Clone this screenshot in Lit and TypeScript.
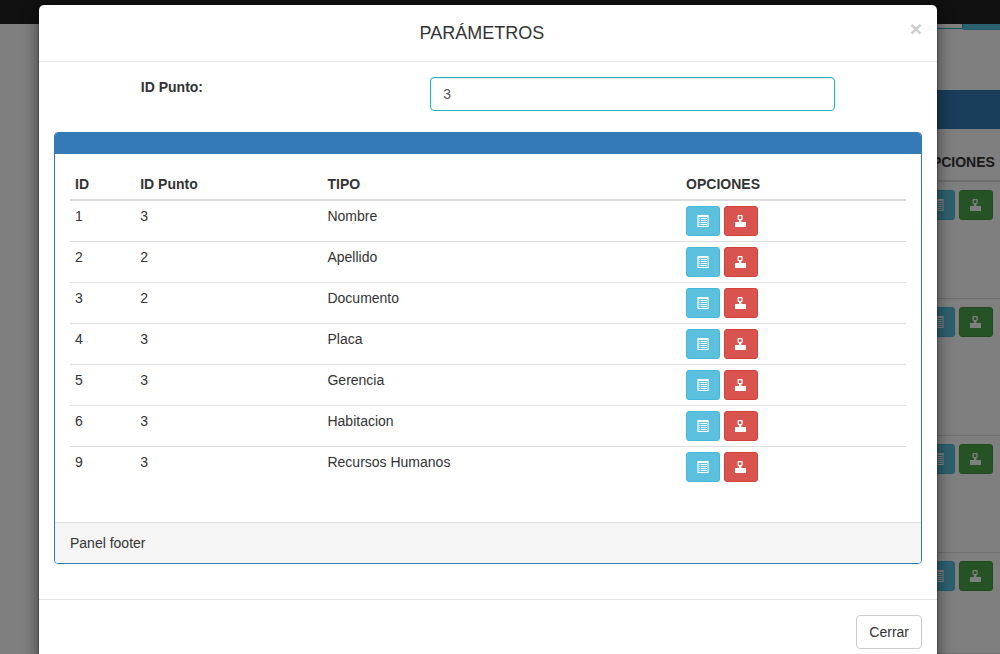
import { LitElement, html, css, svg } from "lit";
import { customElement, property, state } from "lit/decorators.js";

@customElement("icon-button")
class IconButton extends LitElement {
  @property() icon = "list";
  @property() tone = "info";
  @property() label = "";

  static styles = css`
    :host {
      display: inline-block;
    }
    .btn {
      display: flex;
      align-items: center;
      justify-content: center;
      box-sizing: border-box;
      width: 34px;
      height: 30px;
      margin: 0;
      padding: 0 10px;
      border: 1px solid;
      border-radius: 3px;
      color: #fff;
      cursor: pointer;
    }
    .info {
      background: #5bc0de;
      border-color: #46b8da;
    }
    .danger {
      background: #d9534f;
      border-color: #d43f3a;
    }
    .success {
      background: #4ca64c;
      border-color: #449644;
    }
    svg {
      display: block;
      flex: none;
      width: 12px;
      height: 12px;
    }
  `;

  private glyph() {
    return this.icon === "list"
      ? svg`<path fill="currentColor" fill-rule="evenodd" d="M0.4 0h11.2v12H0.4zM1.6 2v9h9V2z"/>
          <path fill="currentColor" d="M2.4 3h1v1h-1zM4 3h6v1H4zM2.4 5h1v1h-1zM4 5h6v1H4zM2.4 7h1v1h-1zM4 7h6v1H4zM2.4 9h1v1h-1zM4 9h6v1H4z"/>`
      : svg`<path fill="currentColor" fill-rule="evenodd" d="M3.3 0h3.6l0.8 0.8v3.4l-0.9 0.9H6.4V7H11v5H0V7h3.9V5.1H3.4l-0.9-0.9V0.8zM3.8 1.2v2.7h2.6V1.2z"/>`;
  }

  render() {
    return html`<button class="btn ${this.tone}" type="button" aria-label=${this.label}>
      <svg viewBox="0 0 12 12" aria-hidden="true">${this.glyph()}</svg>
    </button>`;
  }
}

interface Parametro {
  id: number;
  punto: number;
  tipo: string;
}

@customElement("app-root")
class AppRoot extends LitElement {
  @state() private parametros: Parametro[] = [
    { id: 1, punto: 3, tipo: "Nombre" },
    { id: 2, punto: 2, tipo: "Apellido" },
    { id: 3, punto: 2, tipo: "Documento" },
    { id: 4, punto: 3, tipo: "Placa" },
    { id: 5, punto: 3, tipo: "Gerencia" },
    { id: 6, punto: 3, tipo: "Habitacion" },
    { id: 9, punto: 3, tipo: "Recursos Humanos" },
  ];

  static styles = css`
    :host {
      display: block;
      position: relative;
      height: 100vh;
      overflow: hidden;
      background: #fff;
      color: #333;
      font: 14px/20px "Liberation Sans", Arial, sans-serif;
    }
    * {
      box-sizing: border-box;
    }
    button,
    input {
      font: inherit;
      margin: 0;
    }
    table {
      width: 100%;
      border-spacing: 0;
      table-layout: fixed;
    }
    th {
      text-align: left;
      vertical-align: bottom;
      white-space: nowrap;
      border-bottom: 2px solid #ddd;
    }
    td {
      vertical-align: top;
    }
    tr + tr td {
      border-top: 1px solid #ddd;
    }
    .actions {
      display: flex;
      gap: 4px;
    }

    .navbar {
      height: 24px;
      background: #222;
    }
    .search {
      display: flex;
      align-items: flex-end;
      justify-content: flex-end;
      height: 6px;
      overflow: hidden;
    }
    .search-box {
      width: 240px;
      height: 34px;
      margin-bottom: 1px;
      padding: 6px 12px;
      border: 1px solid #1ab7b7;
    }
    .search-btn {
      width: 37px;
      height: 34px;
      border: 1px solid #46b8da;
      border-right: 0;
      background: #5bc0de;
    }
    .puntos {
      margin: 60px 0 0 60px;
    }
    .puntos-heading {
      height: 39px;
      background: #337ab7;
    }
    .puntos-body {
      padding: 15px 0 0 15px;
    }
    .puntos th,
    .puntos td {
      padding: 8px;
    }
    .puntos-options {
      width: 87px;
    }
    .short {
      height: 117px;
    }
    .tall {
      height: 137px;
    }
    .first {
      height: 116px;
    }
    .last {
      height: 101px;
    }

    .overlay {
      position: absolute;
      inset: 0;
      padding: 4px 24px 0 0;
      overflow: hidden;
      background: rgba(0, 0, 0, 0.5);
    }
    .modal {
      max-width: 900px;
      margin: 0 auto;
      border: 1px solid rgba(0, 0, 0, 0.2);
      border-radius: 6px;
      background: #fff;
      background-clip: padding-box;
      box-shadow: 0 5px 15px rgba(0, 0, 0, 0.5);
    }
    .modal-header {
      padding: 15px;
      border-bottom: 1px solid #e5e5e5;
    }
    .title {
      margin: 0;
      font-size: 18px;
      font-weight: 400;
      line-height: 26px;
      text-align: center;
    }
    .close {
      float: right;
      margin-top: -2px;
      padding: 0;
      border: 0;
      background: none;
      color: #000;
      font-size: 21px;
      font-weight: 700;
      line-height: 21px;
      opacity: 0.2;
      cursor: pointer;
    }
    .modal-body {
      padding: 15px;
    }
    .field {
      display: grid;
      grid-template-columns: 5fr 7fr;
      padding: 0 10%;
      margin-bottom: 21px;
    }
    .field-label {
      font-weight: 700;
    }
    .field-input {
      width: 100%;
      height: 34px;
      padding: 6px 12px;
      border: 1px solid #1ab7b7;
      border-radius: 4px;
      color: #555;
      background: #fff;
      box-shadow: inset 0 1px 1px rgba(0, 0, 0, 0.075);
    }
    .panel {
      margin-bottom: 20px;
      border: 1px solid #337ab7;
      border-radius: 4px;
      overflow: hidden;
    }
    .panel-heading {
      height: 21px;
      background: #337ab7;
    }
    .panel-body {
      padding: 15px;
    }
    .panel-body table {
      margin-bottom: 20px;
    }
    .panel th,
    .panel td {
      padding: 5px;
    }
    .col-id {
      width: 7.8%;
    }
    .col-punto {
      width: 22.4%;
    }
    .col-tipo {
      width: 42.9%;
    }
    .panel-footer {
      padding: 10px 15px;
      border-top: 1px solid #ddd;
      background: #f5f5f5;
    }
    .modal-footer {
      display: flex;
      justify-content: flex-end;
      padding: 15px;
      border-top: 1px solid #e5e5e5;
    }
    .cerrar {
      height: 34px;
      padding: 6px 12px;
      border: 1px solid #ccc;
      border-radius: 4px;
      background: #fff;
      color: #333;
      cursor: pointer;
    }
  `;

  private renderPage() {
    return html`
      <div class="navbar"></div>
      <div class="search">
        <input class="search-box" type="text" aria-label="Buscar punto" />
        <button class="search-btn" type="button" aria-label="Buscar"></button>
      </div>
      <section class="puntos">
        <div class="puntos-heading"></div>
        <div class="puntos-body">
          <table>
            <colgroup><col /><col class="puntos-options" /></colgroup>
            <thead>
              <tr><th></th><th>OPCIONES</th></tr>
            </thead>
            <tbody>
              ${["first", "tall", "short", "last", "short"].map(
                (size) => html`<tr class=${size}>
                  <td></td>
                  <td>
                    <div class="actions">
                      <icon-button icon="list" tone="info" label="Ver punto"></icon-button>
                      <icon-button icon="stamp" tone="success" label="Parámetros del punto"></icon-button>
                    </div>
                  </td>
                </tr>`
              )}
            </tbody>
          </table>
        </div>
      </section>
    `;
  }

  private renderTable() {
    return html`<table>
      <colgroup>
        <col class="col-id" /><col class="col-punto" /><col class="col-tipo" /><col />
      </colgroup>
      <thead>
        <tr><th>ID</th><th>ID Punto</th><th>TIPO</th><th>OPCIONES</th></tr>
      </thead>
      <tbody>
        ${this.parametros.map(
          (p) => html`<tr>
            <td>${p.id}</td>
            <td>${p.punto}</td>
            <td>${p.tipo}</td>
            <td>
              <div class="actions">
                <icon-button icon="list" tone="info" label="Editar ${p.tipo}"></icon-button>
                <icon-button icon="stamp" tone="danger" label="Eliminar ${p.tipo}"></icon-button>
              </div>
            </td>
          </tr>`
        )}
      </tbody>
    </table>`;
  }

  render() {
    return html`
      ${this.renderPage()}
      <div class="overlay">
        <div class="modal" role="dialog" aria-labelledby="titulo">
          <div class="modal-header">
            <button class="close" type="button" aria-label="Cerrar ventana">×</button>
            <h4 class="title" id="titulo">PARÁMETROS</h4>
          </div>
          <div class="modal-body">
            <div class="field">
              <label class="field-label" for="punto">ID Punto:</label>
              <input class="field-input" id="punto" type="text" value="3" />
            </div>
            <section class="panel">
              <div class="panel-heading"></div>
              <div class="panel-body">${this.renderTable()}</div>
              <div class="panel-footer">Panel footer</div>
            </section>
          </div>
          <div class="modal-footer">
            <button class="cerrar" type="button">Cerrar</button>
          </div>
        </div>
      </div>
    `;
  }
}
